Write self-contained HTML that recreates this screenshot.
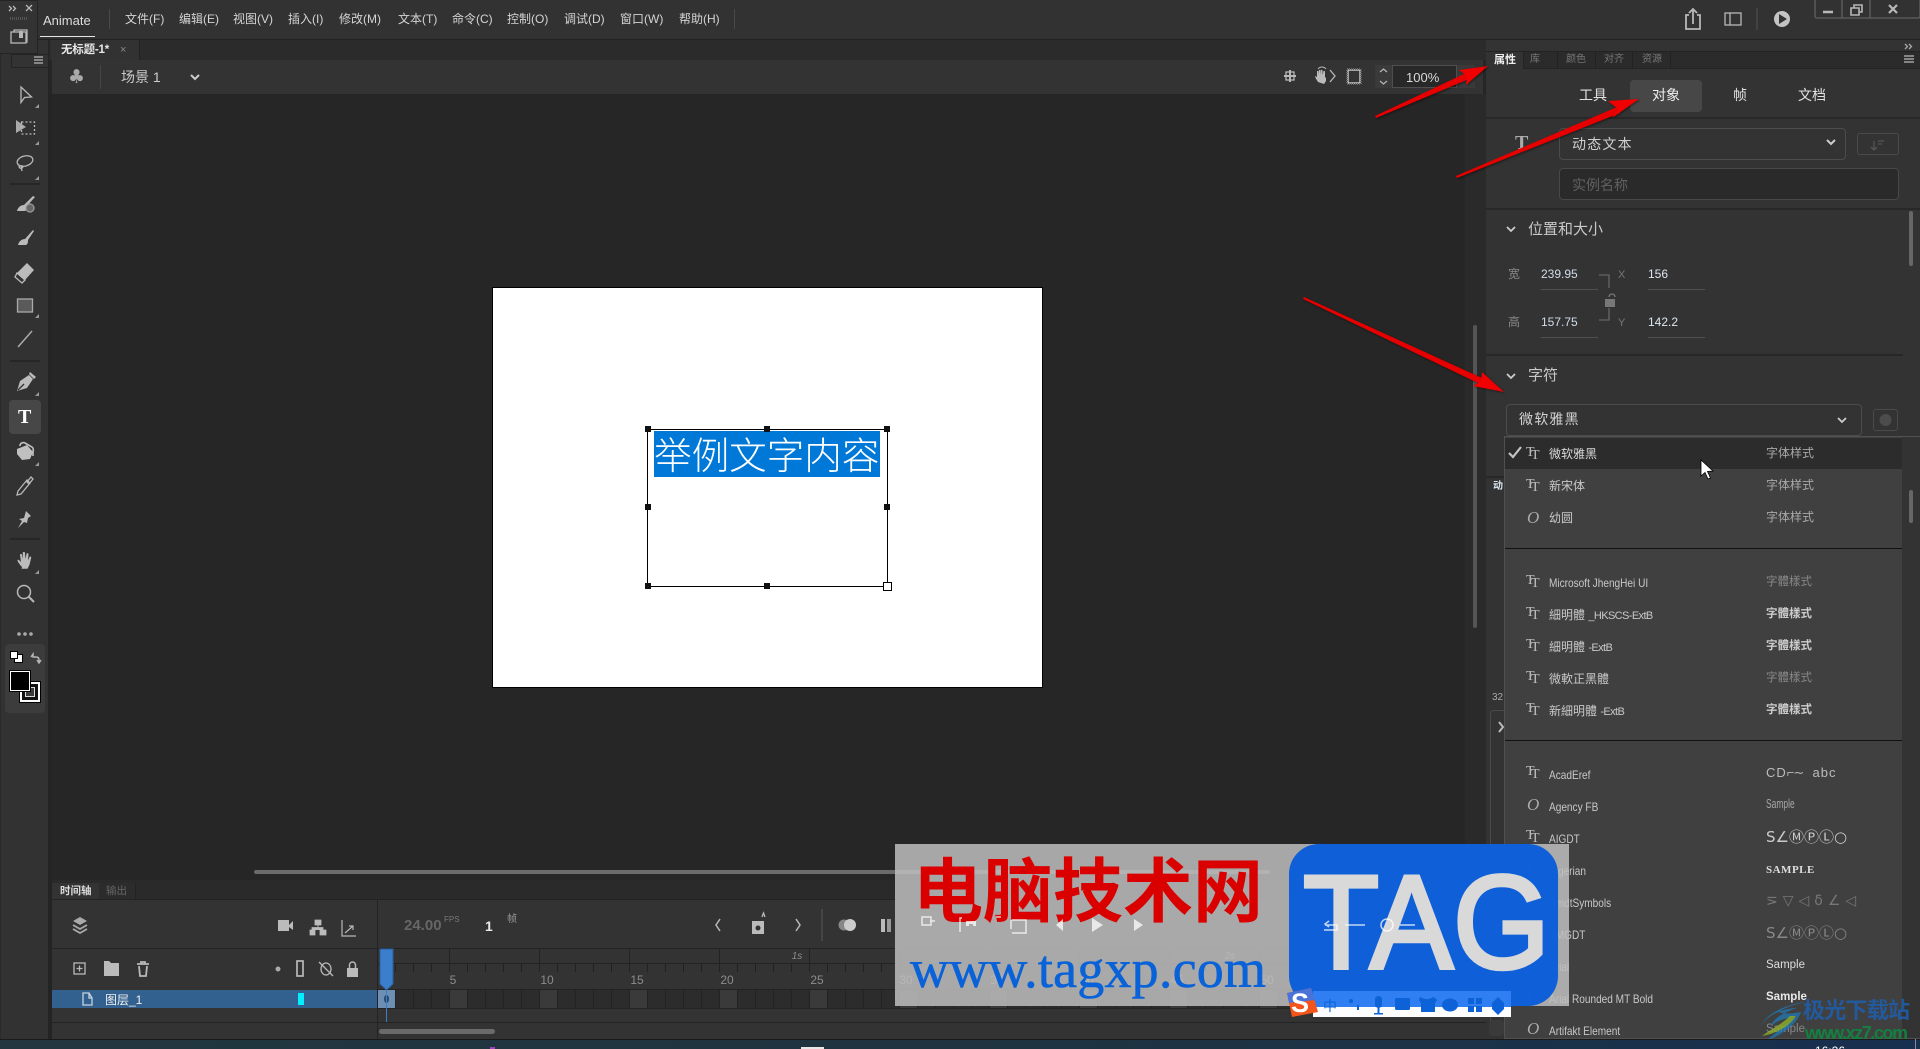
<!DOCTYPE html>
<html lang="zh"><head><meta charset="utf-8"><title>Animate</title>
<style>
html,body{margin:0;padding:0;background:#262626;width:1920px;height:1049px;overflow:hidden}
#r{position:relative;width:1920px;height:1049px;overflow:hidden;font-family:"Liberation Sans","Noto Sans CJK SC",sans-serif;font-size:12px;color:#ccc}
.b{position:absolute}
.t{position:absolute;white-space:nowrap;line-height:20px;height:20px}
.m{font-size:12px;color:#d4d4d4;top:9px}
.tc{font-family:"Liberation Sans","Noto Sans CJK TC",sans-serif}
.c{transform:translateX(-50%)}
.tab{font-size:10px;color:#777;top:50px}
.rn{font-size:12px;color:#c8c8c8;left:1549px;z-index:6}
.l{transform-origin:left center;transform:scaleX(.84)}
.x{font-size:11px;letter-spacing:-.6px}
.rs{font-size:12px;color:#a8a8a8;left:1766px;z-index:6}
.tt{position:absolute;left:1526px;width:16px;height:16px;z-index:6}
.tt i{position:absolute;font:normal 14px/14px "Liberation Serif",serif;color:#c0c0c0}
.tt i:first-child{left:0;top:-1px}.tt i:last-child{left:5px;top:2px}
.oo{position:absolute;left:1527px;font:italic 17px/18px "Liberation Serif",serif;color:#aaa;z-index:6}
.h{position:absolute;width:6px;height:6px;background:#111}
.lb{font-size:12px;color:#8c8c8c}
svg{position:absolute;left:0;top:0}
</style></head><body><div id="r">

<!-- title bar -->
<div class="b" style="left:0;top:0;width:1920px;height:39px;background:#323232"></div>
<div class="b" style="left:0;top:39px;width:1920px;height:1px;background:#212121"></div>
<div class="b" style="left:40px;top:36px;width:55px;height:1px;background:#e6e6e6"></div>
<div class="b" style="left:109px;top:9px;width:1px;height:20px;background:#4a4a4a"></div>
<div class="b" style="left:734px;top:9px;width:1px;height:20px;background:#4a4a4a"></div>
<div class="t" style="left:43px;top:11px;font-size:13px;color:#ddd">Animate</div>
<div class="t m" style="left:125px">文件(F)</div>
<div class="t m" style="left:179px">编辑(E)</div>
<div class="t m" style="left:233px">视图(V)</div>
<div class="t m" style="left:288px">插入(I)</div>
<div class="t m" style="left:339px">修改(M)</div>
<div class="t m" style="left:398px">文本(T)</div>
<div class="t m" style="left:452px">命令(C)</div>
<div class="t m" style="left:507px">控制(O)</div>
<div class="t m" style="left:564px">调试(D)</div>
<div class="t m" style="left:620px">窗口(W)</div>
<div class="t m" style="left:679px">帮助(H)</div>

<!-- doc tab row + scene bar -->
<div class="b" style="left:0;top:40px;width:1486px;height:20px;background:#2b2b2b"></div>
<div class="b" style="left:51px;top:40px;width:88px;height:20px;background:#323232;border-right:1px solid #222"></div>
<div class="t" style="left:61px;top:40px;font-size:11.5px;font-weight:bold;color:#e8e8e8;letter-spacing:-.2px">无标题-1*</div>
<div class="t" style="left:120px;top:40px;font-size:11px;color:#888">×</div>
<div class="b" style="left:52px;top:60px;width:1431px;height:34px;background:#333"></div>
<div class="b" style="left:100px;top:65px;width:1px;height:24px;background:#464646"></div>
<div class="t" style="left:68px;top:67px;font-size:19px;color:#aaa;font-family:'DejaVu Sans',sans-serif">♣</div>
<div class="t" style="left:121px;top:67px;font-size:14px;color:#ccc">场景 1</div>
<div class="b" style="left:1375px;top:65px;width:100px;height:23px;background:#3a3a3a"></div>
<div class="b" style="left:1392px;top:65px;width:65px;height:23px;background:#282828;border:1px solid #4e4e4e;box-sizing:border-box"></div>
<div class="t" style="left:1406px;top:68px;font-size:13px;color:#d8d8d8">100%</div>

<!-- canvas area -->
<div class="b" style="left:52px;top:94px;width:1434px;height:786px;background:#262626"></div>
<div class="b" style="left:1465px;top:94px;width:21px;height:786px;background:#2a2a2a"></div>
<div class="b" style="left:1473px;top:325px;width:4px;height:303px;background:#555;border-radius:2px"></div>
<div class="b" style="left:492px;top:287px;width:549px;height:399px;background:#fff;border:1px solid #000"></div>
<div class="b" style="left:647px;top:429px;width:239px;height:156px;border:1px solid #000"></div>
<div class="b" style="left:654px;top:431px;width:226px;height:46px;background:#0078d7"></div>
<div class="t" style="left:654px;top:436px;width:226px;height:40px;line-height:40px;font-size:37.6px;color:#fff;font-weight:300">举例文字内容</div>
<div class="h" style="left:645px;top:426px"></div><div class="h" style="left:764px;top:426px"></div><div class="h" style="left:884px;top:426px"></div>
<div class="h" style="left:645px;top:504px"></div><div class="h" style="left:884px;top:504px"></div>
<div class="h" style="left:645px;top:583px"></div><div class="h" style="left:764px;top:583px"></div>
<div class="b" style="left:883px;top:582px;width:7px;height:7px;background:#fff;border:1px solid #000"></div>

<!-- timeline -->
<div class="b" style="left:49px;top:880px;width:1437px;height:159px;background:#2a2a2a"></div>
<div class="b" style="left:52px;top:899px;width:1434px;height:140px;background:#333"></div>
<div class="b" style="left:52px;top:883px;width:47px;height:16px;background:#333"></div>
<div class="b" style="left:99px;top:883px;width:36px;height:16px;background:#2c2c2c;border-right:1px solid #222"></div>
<div class="t" style="left:60px;top:881px;font-size:10.5px;font-weight:bold;color:#ddd">时间轴</div>
<div class="t" style="left:106px;top:881px;font-size:10.5px;color:#666">输出</div>
<div class="b" style="left:52px;top:899px;width:1434px;height:1px;background:#232323"></div>
<div class="b" style="left:377px;top:900px;width:1px;height:139px;background:#232323"></div>
<div class="b" style="left:52px;top:948px;width:1434px;height:1px;background:#232323"></div>
<div class="b" style="left:254px;top:870px;width:1016px;height:4px;background:#6a6a6a;border-radius:2px"></div>
<!-- ruler -->
<div class="b" style="left:378px;top:949px;width:1100px;height:14px;background:repeating-linear-gradient(90deg,transparent 0 71px,#232323 71px 72px,transparent 72px 90px)"></div>
<div class="b" style="left:378px;top:963px;width:1100px;height:1px;background:#232323"></div>
<div class="b" style="left:378px;top:963px;width:1100px;height:9px;background:repeating-linear-gradient(90deg,transparent 0 17px,#222 17px 18px)"></div>
<div class="b" style="left:378px;top:989px;width:1100px;height:1px;background:#232323"></div>
<div class="t lb c" style="left:453px;top:970px">5</div><div class="t lb c" style="left:547px;top:970px">10</div><div class="t lb c" style="left:637px;top:970px">15</div><div class="t lb c" style="left:727px;top:970px">20</div><div class="t lb c" style="left:817px;top:970px">25</div>
<div class="t lb c" style="left:906px;top:970px">30</div><div class="t lb c" style="left:997px;top:970px">35</div><div class="t lb c" style="left:1087px;top:970px">40</div><div class="t lb c" style="left:1177px;top:970px">45</div><div class="t lb c" style="left:1267px;top:970px">50</div><div class="t lb c" style="left:1357px;top:970px">55</div><div class="t lb c" style="left:1447px;top:970px">60</div>
<div class="t lb c" style="left:797px;top:947px;font-size:10px;font-style:italic">1s</div>
<div class="t lb c" style="left:1230px;top:947px;font-size:10px;font-style:italic">2s</div>
<!-- frames -->
<div class="b" style="left:378px;top:990px;width:1100px;height:18px;background:repeating-linear-gradient(90deg,#2c2c2c 0 17px,#232323 17px 18px)"></div>
<div class="b" style="left:450px;top:990px;width:1028px;height:18px;background:repeating-linear-gradient(90deg,#3a3a3a 0 17px,transparent 17px 90px)"></div>
<div class="b" style="left:378px;top:1008px;width:1100px;height:1px;background:#232323"></div>
<div class="b" style="left:52px;top:990px;width:325px;height:18px;background:#33618f"></div>
<div class="b" style="left:378px;top:990px;width:17px;height:18px;background:#6d8fb3"></div>
<div class="b" style="left:384px;top:995px;width:5px;height:8px;border-radius:50%;background:#264a6f"></div>
<div class="b" style="left:298px;top:993px;width:6px;height:12px;background:#00f0ff"></div>
<div class="t" style="left:105px;top:990px;font-size:12px;color:#f0f0f0">图层_1</div>
<div class="b" style="left:52px;top:1022px;width:1434px;height:1px;background:#232323"></div>
<div class="b" style="left:379px;top:1029px;width:116px;height:5px;background:#6a6a6a;border-radius:3px"></div>
<div class="b" style="left:386px;top:988px;width:1px;height:34px;background:#3b7ecb"></div>
<svg width="1920" height="1049" style="z-index:1"><polygon points="380,949 393,949 393,984 386.500,990 380,984" fill="#3b7ecb" stroke="#2a5f9f"/></svg>
<div class="t" style="left:404px;top:916px;font-size:15px;color:#666;font-weight:bold">24.00</div>
<div class="t" style="left:444px;top:910px;font-size:8px;color:#777">FPS</div>
<div class="t" style="left:485px;top:916px;font-size:14px;color:#e8e8e8;font-weight:bold">1</div>
<div class="t" style="left:507px;top:910px;font-size:10px;color:#999">帧</div>

<!-- left toolbar -->
<div class="b" style="left:0;top:40px;width:49px;height:999px;background:#323232;border-right:1px solid #242424;border-left:1px solid #2a2a2a;box-sizing:border-box"></div>
<div class="b" style="left:49px;top:94px;width:3px;height:945px;background:#242424"></div>
<div class="b" style="left:0;top:0;width:38px;height:54px;background:#333;border:1px solid #242424;border-left:0;box-sizing:border-box"></div>
<div class="b" style="left:11px;top:54px;width:38px;height:14px;background:#333;border:1px solid #242424;box-sizing:border-box"></div>
<div class="b" style="left:9px;top:400px;width:32px;height:34px;background:#474747;border-radius:4px"></div>
<div class="b" style="left:5px;top:644px;width:40px;height:69px;background:#3c3c3c;border-radius:4px"></div>
<div class="b" style="left:10px;top:183px;width:30px;height:2px;background:#262626"></div>
<div class="b" style="left:10px;top:360px;width:30px;height:2px;background:#262626"></div>
<div class="b" style="left:10px;top:538px;width:30px;height:2px;background:#262626"></div>
<div class="b" style="left:20px;top:682px;width:20px;height:20px;background:#111;border:2px solid #fff;box-sizing:border-box;outline:1px solid #000"></div>
<div class="b" style="left:25px;top:687px;width:10px;height:10px;background:#3c3c3c;border:1px solid #ddd;box-sizing:border-box"></div>
<div class="b" style="left:10px;top:671px;width:20px;height:20px;background:#000;border:1px solid #fff;box-sizing:border-box;outline:1px solid #000"></div>
<div class="b" style="left:14px;top:654px;width:7px;height:7px;background:#fff;border:1px solid #000"></div>
<div class="b" style="left:10px;top:651px;width:6px;height:6px;background:#fff;border:1px solid #000"></div>
<div class="t" style="left:18px;top:407px;font:bold 20px/20px 'Liberation Serif',serif;color:#fff">T</div>

<!-- properties panel -->
<div class="b" style="left:1486px;top:40px;width:434px;height:999px;background:#333"></div>
<div class="b" style="left:1486px;top:51px;width:434px;height:1px;background:#222"></div>
<div class="b" style="left:1486px;top:52px;width:434px;height:16px;background:#2b2b2b"></div>
<div class="b" style="left:1486px;top:68px;width:434px;height:1px;background:#232323"></div>
<div class="b" style="left:1486px;top:52px;width:38px;height:17px;background:#333;border-right:1px solid #232323;box-sizing:border-box"></div>
<div class="b" style="left:1557px;top:52px;width:1px;height:16px;background:#222"></div><div class="b" style="left:1595px;top:52px;width:1px;height:16px;background:#222"></div><div class="b" style="left:1632px;top:52px;width:1px;height:16px;background:#222"></div><div class="b" style="left:1670px;top:52px;width:1px;height:16px;background:#222"></div>
<div class="t" style="left:1494px;top:50px;font-size:11px;font-weight:bold;color:#eee">属性</div>
<div class="t tab" style="left:1530px">库</div>
<div class="t tab" style="left:1566px">颜色</div>
<div class="t tab" style="left:1604px">对齐</div>
<div class="t tab" style="left:1642px">资源</div>
<div class="b" style="left:1630px;top:80px;width:72px;height:32px;background:#474747;border-radius:4px"></div>
<div class="t c" style="left:1593px;top:85px;font-size:14px;color:#e2e2e2">工具</div>
<div class="t c" style="left:1666px;top:85px;font-size:14px;color:#eee">对象</div>
<div class="t c" style="left:1740px;top:85px;font-size:14px;color:#e2e2e2">帧</div>
<div class="t c" style="left:1812px;top:85px;font-size:14px;color:#e2e2e2">文档</div>
<div class="b" style="left:1486px;top:117px;width:434px;height:2px;background:#282828"></div>
<div class="t" style="left:1515px;top:133px;font:bold 20px/20px 'Liberation Serif',serif;color:#aaa">T</div>
<div class="b" style="left:1559px;top:128px;width:287px;height:32px;border:1px solid #4c4c4c;border-radius:4px;box-sizing:border-box"></div>
<div class="t" style="left:1572px;top:134px;font-size:14px;letter-spacing:1.2px;color:#d0d0d0">动态文本</div>
<div class="b" style="left:1857px;top:133px;width:42px;height:22px;border:1px solid #4a4a4a;border-radius:3px;box-sizing:border-box"></div>
<div class="b" style="left:1559px;top:168px;width:340px;height:32px;background:#2a2a2a;border:1px solid #484848;border-radius:4px;box-sizing:border-box"></div>
<div class="t" style="left:1572px;top:175px;font-size:14px;color:#606060">实例名称</div>
<div class="b" style="left:1486px;top:208px;width:434px;height:2px;background:#282828"></div>
<div class="b" style="left:1909px;top:211px;width:4px;height:55px;background:#666;border-radius:2px"></div>
<div class="t" style="left:1528px;top:220px;font-size:15px;color:#c8c8c8">位置和大小</div>
<div class="t" style="left:1508px;top:264px;font-size:12px;color:#888">宽</div>
<div class="t" style="left:1541px;top:264px;font-size:12px;color:#d0dcea">239.95</div>
<div class="b" style="left:1541px;top:289px;width:57px;height:1px;background:#505050"></div>
<div class="t" style="left:1618px;top:265px;font-size:11px;color:#777">X</div>
<div class="t" style="left:1648px;top:264px;font-size:12px;color:#dde6f0">156</div>
<div class="b" style="left:1648px;top:289px;width:57px;height:1px;background:#505050"></div>
<div class="t" style="left:1508px;top:312px;font-size:12px;color:#888">高</div>
<div class="t" style="left:1541px;top:312px;font-size:12px;color:#d0dcea">157.75</div>
<div class="b" style="left:1541px;top:337px;width:57px;height:1px;background:#505050"></div>
<div class="t" style="left:1618px;top:313px;font-size:11px;color:#777">Y</div>
<div class="t" style="left:1648px;top:312px;font-size:12px;color:#dde6f0">142.2</div>
<div class="b" style="left:1648px;top:337px;width:57px;height:1px;background:#505050"></div>
<div class="b" style="left:1486px;top:354px;width:417px;height:2px;background:#272727"></div>
<div class="t" style="left:1528px;top:366px;font-size:15px;color:#c8c8c8">字符</div>
<div class="b" style="left:1506px;top:404px;width:356px;height:32px;border:1px solid #4c4c4c;border-radius:4px;box-sizing:border-box"></div>
<div class="t" style="left:1519px;top:409px;font-size:14px;letter-spacing:1.2px;color:#d4d4d4">微软雅黑</div>
<div class="b" style="left:1873px;top:409px;width:25px;height:22px;border:1px solid #4a4a4a;border-radius:3px;box-sizing:border-box"></div>
<div class="b" style="left:1486px;top:476px;width:18px;height:2px;background:#272727"></div>
<div class="t" style="left:1493px;top:477px;font-size:10px;font-weight:bold;color:#d8e6f2">动</div>
<div class="t" style="left:1492px;top:688px;font-size:10px;color:#aaa">32</div>
<div class="b" style="left:1490px;top:710px;width:14px;height:320px;border:1px solid #4a4a4a;border-right:0;border-radius:4px 0 0 4px;box-sizing:border-box"></div>
<div class="b" style="left:1489px;top:1020px;width:15px;height:16px;background:#3a3a3a;border-radius:4px"></div>

<!-- dropdown -->
<div class="b" style="left:1504px;top:436px;width:416px;height:603px;background:#333;border:1px solid #505050;border-right:0;box-sizing:border-box;z-index:5"></div>
<div class="b" style="left:1505px;top:437px;width:397px;height:601px;background:#404040;z-index:5"></div>
<div class="b" style="left:1505px;top:438px;width:397px;height:31px;background:#2c2c2c;z-index:5"></div>
<div class="b" style="left:1909px;top:490px;width:4px;height:33px;background:#666;border-radius:2px;z-index:5"></div>
<div class="b" style="left:1505px;top:548px;width:397px;height:1px;background:#111;z-index:5"></div>
<div class="b" style="left:1505px;top:740px;width:397px;height:1px;background:#111;z-index:5"></div>

<div class="tt" style="top:447px"><i>T</i><i>T</i></div><div class="t rn" style="top:444px;color:#d8d8d8">微软雅黑</div><div class="t rs" style="top:443px">字体样式</div>
<div class="tt" style="top:479px"><i>T</i><i>T</i></div><div class="t rn" style="top:476px">新宋体</div><div class="t rs" style="top:475px">字体样式</div>
<div class="oo" style="top:509px">O</div><div class="t rn" style="top:508px">幼圆</div><div class="t rs" style="top:507px">字体样式</div>

<div class="tt" style="top:575px"><i>T</i><i>T</i></div><div class="t rn l" style="top:573px">Microsoft JhengHei UI</div><div class="t rs tc" style="top:572px;font-size:11.5px;color:#888">字體樣式</div>
<div class="tt" style="top:607px"><i>T</i><i>T</i></div><div class="t rn tc" style="top:605px">細明體 <span class="x">_HKSCS-ExtB</span></div><div class="t rs tc" style="top:604px;font-size:11.5px;font-weight:bold;color:#ccc">字體樣式</div>
<div class="tt" style="top:639px"><i>T</i><i>T</i></div><div class="t rn tc" style="top:637px">細明體 <span class="x">-ExtB</span></div><div class="t rs tc" style="top:636px;font-size:11.5px;font-weight:bold;color:#ccc">字體樣式</div>
<div class="tt" style="top:671px"><i>T</i><i>T</i></div><div class="t rn tc" style="top:669px">微軟正黑體</div><div class="t rs tc" style="top:668px;font-size:11.5px;color:#888">字體樣式</div>
<div class="tt" style="top:703px"><i>T</i><i>T</i></div><div class="t rn tc" style="top:701px">新細明體 <span class="x">-ExtB</span></div><div class="t rs tc" style="top:700px;font-size:11.5px;font-weight:bold;color:#ccc">字體樣式</div>

<div class="tt" style="top:766px"><i>T</i><i>T</i></div><div class="t rn l" style="top:765px">AcadEref</div><div class="t rs" style="top:763px;font-size:13px;letter-spacing:1px;color:#bbb">CD<span style="letter-spacing:-1px">⌐∼</span>&nbsp;&nbsp;abc</div>
<div class="oo" style="top:796px">O</div><div class="t rn l" style="top:797px">Agency FB</div><div class="t rs" style="top:794px;font-size:13px;transform-origin:left center;transform:scaleX(.65)">Sample</div>
<div class="tt" style="top:830px"><i>T</i><i>T</i></div><div class="t rn l" style="top:829px">AIGDT</div><div class="t rs" style="top:827px;font-family:'DejaVu Sans',sans-serif;font-size:15px;color:#ccc">S∠ⓂⓅⓁ○</div>
<div class="oo" style="top:860px">O</div><div class="t rn l" style="top:861px">Algerian</div><div class="t rs" style="top:860px;font:bold 11px/20px 'Liberation Serif',serif;color:#ddd;letter-spacing:.5px">SAMPLE</div>
<div class="tt" style="top:894px"><i>T</i><i>T</i></div><div class="t rn l" style="top:893px">AmdtSymbols</div><div class="t rs" style="top:891px;font-family:'DejaVu Sans',sans-serif;font-size:14px;color:#777;letter-spacing:5px">⋝▽◁δ∠◁</div>
<div class="tt" style="top:926px"><i>T</i><i>T</i></div><div class="t rn l" style="top:925px">AMGDT</div><div class="t rs" style="top:923px;font-family:'DejaVu Sans',sans-serif;font-size:15px;color:#888">S∠ⓂⓅⓁ○</div>
<div class="oo" style="top:956px">O</div><div class="t rn l" style="top:957px">Arial</div><div class="t rs" style="top:955px;font-size:11.5px;color:#ddd">Sample</div>
<div class="oo" style="top:988px">O</div><div class="t rn l" style="top:989px">Arial Rounded MT Bold</div><div class="t rs" style="top:987px;font-size:11.5px;font-weight:bold;color:#e8e8e8">Sample</div>
<div class="oo" style="top:1020px">O</div><div class="t rn l" style="top:1021px">Artifakt Element</div><div class="t rs" style="top:1019px;font-size:11.5px;color:#888">Sample</div>

<!-- icons layer -->
<svg width="1920" height="1049" style="z-index:7" fill="none" stroke="#b8b8b8" stroke-width="1.3">
<!-- check -->
<path d="M1509 453l4 4 8-10" stroke="#c4c4c4" stroke-width="2.200"/>
<!-- title bar -->
<path d="M1689 15h-3v14h14V15h-3M1693 24V9M1689 13l4-4 4 4" stroke-width="1.800"/>
<rect x="1725" y="13" width="16" height="12" /><path d="M1730 13v12" />
<path d="M1757 8v22" stroke="#4a4a4a"/>
<circle cx="1782" cy="19" r="8" fill="#c4c4c4" stroke="none"/><polygon points="1779,14 1787,19 1779,24" fill="#323232" stroke="none"/>
<path d="M1815 0v16q0 2 2 2h101q2 0 2-2V0M1842 0v18M1870 0v18" stroke="#606060"/>
<path d="M1823 12h10" stroke-width="2.500"/><path d="M1851 8h8v7h-8zM1854 8V5h8v7h-3" stroke-width="1.600"/><path d="M1889 5l8 8M1897 5l-8 8" stroke-width="2.200"/>
<!-- floating panel -->
<path d="M9 6l2.500 2.500L9 11M13 6l2.500 2.500L13 11M26 5l6 6M32 5l-6 6" stroke-width="1.300"/>
<path d="M10 27.500h18" stroke="#555" stroke-width="3" stroke-dasharray="1 1" transform="translate(0,-9)"/>
<rect x="11" y="32" width="15" height="11"/><path d="M14 32v-2h13v12h-1" /><rect x="19" y="31" width="4" height="7" fill="#b8b8b8" stroke="none"/>
<path d="M34 57h9M34 60h9M34 63h9"/>
<!-- scene bar -->
<path d="M191 75l4 4 4-4" stroke-width="2" stroke="#ccc"/>
<path d="M1284 76h12M1290 70v12" stroke-width="2"/><rect x="1286" y="72" width="8" height="8"/>
<path d="M1318 82c-2-3-3-5-3-6l2 1v-6h1.500v4l.5-5h1.500v5l.5-5h1.500v5l1-4h1.500v7l1-1v4l-2 3z" fill="#bbb" stroke="none"/><path d="M1330 70l5 6-5 6" /><path d="M1318 69a5 5 0 0 1 8 0" stroke-width="1"/>
<rect x="1348" y="70" width="12" height="13" stroke="#ddd"/><rect x="1347" y="69" width="14" height="15" stroke="#666" stroke-width="2" stroke-dasharray="1 1"/>
<path d="M1380 72l3.500-3 3.500 3M1380 81l3.500 3 3.500-3" stroke-width="1.200"/>
<!-- panel icons -->
<path d="M1905 44l2.500 2.500-2.500 2.500M1909 44l2.500 2.500-2.500 2.500" stroke="#aaa"/>
<path d="M1904 56h10M1904 59h10M1904 62h10" stroke="#bbb" stroke-width="1.200"/>
<path d="M1827 140l4 4 4-4" stroke="#ccc" stroke-width="2"/>
<path d="M1874 141v9M1871 147l3 3 3-3M1878 141h6M1878 144h4" stroke="#555"/>
<path d="M1507 227l4 4 4-4M1507 374l4 4 4-4M1838 418l4 4 4-4" stroke="#ccc" stroke-width="1.800"/>
<path d="M1499 722l4 5-4 5" stroke="#bbb" stroke-width="2"/>
<path d="M1599 275h10v13M1599 320h10v-12" stroke="#666"/>
<path d="M1609 297a3 3 0 0 1 6 0" stroke="#777"/><rect x="1605" y="299" width="10" height="8" fill="#777" stroke="none"/><circle cx="1885.500" cy="420" r="6" fill="#4c4c4c" stroke="none"/>
<!-- tools -->
<g>
<path d="M21 87l10.500 10-7 .5-3.500 5z"/>
<polygon points="16,120 26,127 16,133" fill="#aaa" stroke="none"/><rect x="21.500" y="122" width="13" height="12" stroke-dasharray="2 2"/>
<ellipse cx="25" cy="161" rx="8" ry="5" transform="rotate(-15 25 161)"/><path d="M20 165c-2 2 0 4 2 3s0-3-1-2l1 5"/>
<path d="M33 196l-9 9c-3 0-6 2-7 6h8c2-1 2-3 2-5l8-9z" fill="#bbb" stroke="none"/><circle cx="30" cy="208" r="4" fill="#666" stroke="#999"/>
<path d="M33 230l-8 9c-3 0-6 2-7 6h8c2-1 2-3 2-5l6-9z" fill="#bbb" stroke="none"/>
<path d="M27 263l7 7-9 10-8-7z" fill="#bbb" stroke="none"/><path d="M17 273l8 7-3 3-7-6z" stroke="#bbb"/>
<rect x="17.500" y="299" width="15" height="13" fill="#5a5a5a" stroke="#aaa"/>
<path d="M18 347l14-16" stroke="#aaa" stroke-width="1.500"/>
<path d="M29 375l4 4-6 9-10 3 3-10zM30 372l6 5-2 2-5-5z" fill="#bbb" stroke="none"/><path d="M18 390l6-6" stroke="#323232"/>
<path d="M17 449l10-4 6 7-3 7-8 1-5-6z" fill="#c0c0c0" stroke="none"/><path d="M20 446c0-3 3-4 5-3l7 4c1.500 1 1.500 3 1 5v4" stroke="#c0c0c0" stroke-width="1.600"/>
<path d="M31 477l2 2-4 5-2-2zM27 480l-9 11-1 4 4-1 9-11z"/>
<path d="M26 511l5 5-3 2-1 5-3-1-6 6 4-7-3-2 5-1z" fill="#bbb" stroke="none"/>
<path d="M22 567c-2-2-5-6-4.500-7 1-1 3 1.500 3.500 2l-1-7c0-1.500 2-1.500 2 0l1 4-.3-6c0-1.500 2.300-1.500 2.300 0l.5 6 1-5c.3-1.500 2.300-1 2 .5l-.5 6 1.500-3.500c.7-1 2-.5 1.700.8l-1.700 7-2 4h-6z" fill="#bbb" stroke="none"/>
<circle cx="24" cy="592" r="6.500" stroke-width="1.500"/><path d="M29 597l5 5" stroke-width="2"/>
<circle cx="19" cy="634" r="1.800" fill="#aaa" stroke="none"/><circle cx="25" cy="634" r="1.800" fill="#aaa" stroke="none"/><circle cx="31" cy="634" r="1.800" fill="#aaa" stroke="none"/>
<path d="M31 657l2-3v3h3c2 0 3 1 3 3v2M37 660l2 3 2-3" stroke-width="1.400"/>
<path d="M39 104v4h-4zM39 141v4h-4zM39 176v4h-4zM39 314v4h-4zM39 392v4h-4zM39 462v4h-4zM39 570v4h-4z" fill="#999" stroke="none"/>
</g>
<!-- timeline icons -->
<path d="M80 917l7 4-7 4-7-4z" fill="#aaa" stroke="none"/><path d="M73 925l7 4 7-4M73 929l7 4 7-4" stroke="#aaa" stroke-width="1.800"/>
<rect x="278" y="920" width="11" height="11" fill="#bbb" stroke="none"/><polygon points="289,925 293,921 293,930 289,927" fill="#bbb" stroke="none"/>
<path d="M315 920h6v5h-6zM310 930h5v5h-5zM320 930h6v5h-6zM312 930v-2.500h11v2.500M318 925v3" fill="#bbb" stroke="#bbb" stroke-width=".8"/>
<path d="M342 920v16h14M345 933l8-7M349 926h4v4" stroke-width="1.200"/>
<path d="M720 919l-4 6 4 6M796 919l4 6-4 6" stroke-width="1.500"/>
<path d="M822 909v32" stroke="#454545" stroke-width="2"/>
<rect x="752" y="921" width="12" height="13" fill="#bbb" stroke="none"/><circle cx="758" cy="928" r="2.500" fill="#323232" stroke="none"/>
<path d="M762 917l1.500-4 1.500 4" stroke="#bbb"/>
<circle cx="844" cy="925" r="5.500" fill="#888" stroke="none"/><circle cx="850" cy="925" r="6" fill="#ccc" stroke="none"/>
<rect x="881" y="919" width="4" height="13" fill="#bbb" stroke="none"/><rect x="887" y="919" width="4" height="13" fill="#999" stroke="none"/>
<rect x="74" y="963" width="11" height="11" /><path d="M79.500 965.500v6M76.500 968.500h6" />
<path d="M104 959h5l2 2h8v13h-15z" fill="#bbb" stroke="none" transform="translate(0,2)"/>
<path d="M137 964h12M141 964v-2h4v2M139 966l1 10h6l1-10" stroke-width="1.800"/>
<circle cx="278" cy="969" r="2.500" fill="#aaa" stroke="none"/>
<rect x="297" y="961" width="6" height="15" stroke-width="1.700"/>
<ellipse cx="326" cy="969" rx="5" ry="6"/><path d="M319 962l14 14" />
<rect x="347" y="968" width="11" height="9" fill="#bbb" stroke="none"/><path d="M349.500 968v-3a3 3 0 0 1 6 0v3" stroke-width="1.500"/>
<path d="M83 993h6v5l3 0v7h-9z M89 993l3 5" stroke="#c5d3e0" />
</svg>

<!-- watermark overlay -->
<div class="b" style="left:895px;top:844px;width:674px;height:162px;background:rgba(190,190,190,.85);z-index:8"></div>
<svg width="1920" height="1049" style="z-index:9">
<rect x="1289" y="844" width="269" height="162" rx="30" fill="rgba(8,92,218,.96)"/>
<text x="1303" y="968" font-family="Liberation Sans" font-size="133" fill="#d9d9d9" stroke="#d9d9d9" stroke-width="4" textLength="247" lengthAdjust="spacingAndGlyphs">TAG</text>
<text x="913" y="916" font-family="Noto Sans CJK SC" font-weight="bold" font-size="70" fill="#da0000" textLength="350">电脑技术网</text>
<text x="910" y="987" font-family="Liberation Serif" font-size="54" fill="#0a62d8" stroke="#0a62d8" stroke-width=".6" textLength="356">www.tagxp.com</text>
<g fill="none" stroke="rgba(255,255,255,.75)" stroke-width="1.500">
<path d="M922 925v-8h9v8zM930 921h5M1001 917h-5M962 918h-2v14M1011 929v-9"/>
<path d="M966 921h10v5h-3v-2h-4v2h-3z" fill="rgba(255,255,255,.75)" stroke="none"/>
<path d="M1012 920h14v13h-14" />
<path d="M1056 919v12M1063 919l-7 6 7 6zM1092 918l11 7-11 7zM1131 919v12M1134 919l9 6-9 6z" fill="rgba(255,255,255,.75)" stroke="none"/>
<path d="M1325 925h12v5h-13M1329 921l-4 3 4 3M1345 925h20M1400 925h15"/><circle cx="1387" cy="925" r="6"/>
</g>
<!-- sogou bar -->
<rect x="1313" y="991" width="198" height="16" fill="#2f7ff2"/>
<rect x="1313" y="1007" width="198" height="10" fill="#fdfdfd"/>
<polygon points="1287,993 1311,988 1318,1012 1292,1017" fill="#f2541b"/>
<polygon points="1287,993 1311,988 1315,1000 1289,1003" fill="#4a72d8"/>
<text x="1291" y="1012" font-family="Liberation Sans" font-weight="bold" font-size="27" fill="#fff">S</text>
<text x="1323" y="1011" font-size="14" font-family="Noto Sans CJK SC" fill="#0d62d8">中</text>
<g fill="#0d62d8" stroke="none">
<circle cx="1351" cy="1001" r="2"/><rect x="1357" y="1005" width="2" height="5"/>
<rect x="1375" y="996" width="7" height="12" rx="3.500"/><rect x="1377.500" y="1008" width="2" height="5"/><rect x="1374" y="1013" width="9" height="1.500"/>
<rect x="1395" y="998" width="15" height="12" rx="1.500"/>
<path d="M1420 997l5 2h4l5-2 3 3-2 3v9h-14v-9l-2-3z"/>
<ellipse cx="1450" cy="1005" rx="8" ry="6.500"/>
<rect x="1468" y="998" width="6" height="6"/><rect x="1476" y="998" width="6" height="6"/><rect x="1468" y="1006" width="6" height="6"/><rect x="1476" y="1006" width="6" height="6"/>
<path d="M1498 997l6 6v6l-6 6-6-6v-6z"/>
</g>
<!-- arrows -->
<g style="filter:drop-shadow(1px 1px 1px rgba(0,0,0,.45))">
<polygon points="1375,116 1466,73 1469,79 1376,118" fill="#e60000"/><polygon points="1488,66 1459,70 1467,76 1466,85" fill="#f00000"/>
<polygon points="1456,176 1617,107 1620,113 1457,178" fill="#e60000"/><polygon points="1639,99 1608,101 1618,109 1612,118" fill="#f00000"/>
<polygon points="1304,297 1482,378 1480,384 1303,299" fill="#e60000"/><polygon points="1504,392 1482,372 1481,381 1473,386" fill="#f00000"/>
</g>
</svg>

<!-- xz7 watermark -->
<svg width="1920" height="1049" style="z-index:10">
<path d="M1806 1002c-20 2-40 12-45 24 5-10 22-18 36-18-12 4-24 10-26 18 6-6 16-8 26-10-8 6-20 16-30 24 14-4 30-16 34-28-10 2-18 2-22 0 8-6 18-8 27-10z" fill="#1f7ab8" opacity=".75"/>
<path d="M1762 1036c12-2 26-8 34-20l-6 0c-8 8-20 14-28 20z" fill="#8fae28" opacity=".8"/>
<text x="1803" y="1018" font-family="Noto Sans CJK SC" font-weight="bold" font-size="22" fill="#1d5fae" opacity=".85" textLength="107">极光下载站</text>
<text x="1805" y="1039" font-family="Liberation Sans" font-weight="bold" font-size="18" fill="#138040" textLength="103">www.xz7.com</text>
</svg>

<!-- mouse cursor -->
<svg width="1920" height="1049" style="z-index:11"><path d="M1701 460v16l4-3.500 3 6.500 2.500-1-3-6.500 5.500-.5z" fill="#fff" stroke="#000" stroke-width=".8"/></svg>

<!-- taskbar -->
<div class="b" style="left:0;top:1039px;width:1920px;height:10px;background:linear-gradient(90deg,#21363f,#1f3440 50%,#17304f);z-index:12"></div>
<div class="b" style="left:0;top:1039px;width:1920px;height:1px;background:#1a1a1a;z-index:12"></div>
<div class="b" style="left:490px;top:1047px;width:5px;height:2px;background:#a040c0;z-index:12"></div>
<div class="b" style="left:801px;top:1047px;width:23px;height:2px;background:#e8e8e8;z-index:12"></div>
<div class="t" style="left:1815px;top:1041px;font-size:12px;color:#fff;z-index:12">16:26</div>
<div class="b" style="left:1915px;top:1039px;width:1px;height:10px;background:#889;z-index:12"></div>
</div></body></html>
